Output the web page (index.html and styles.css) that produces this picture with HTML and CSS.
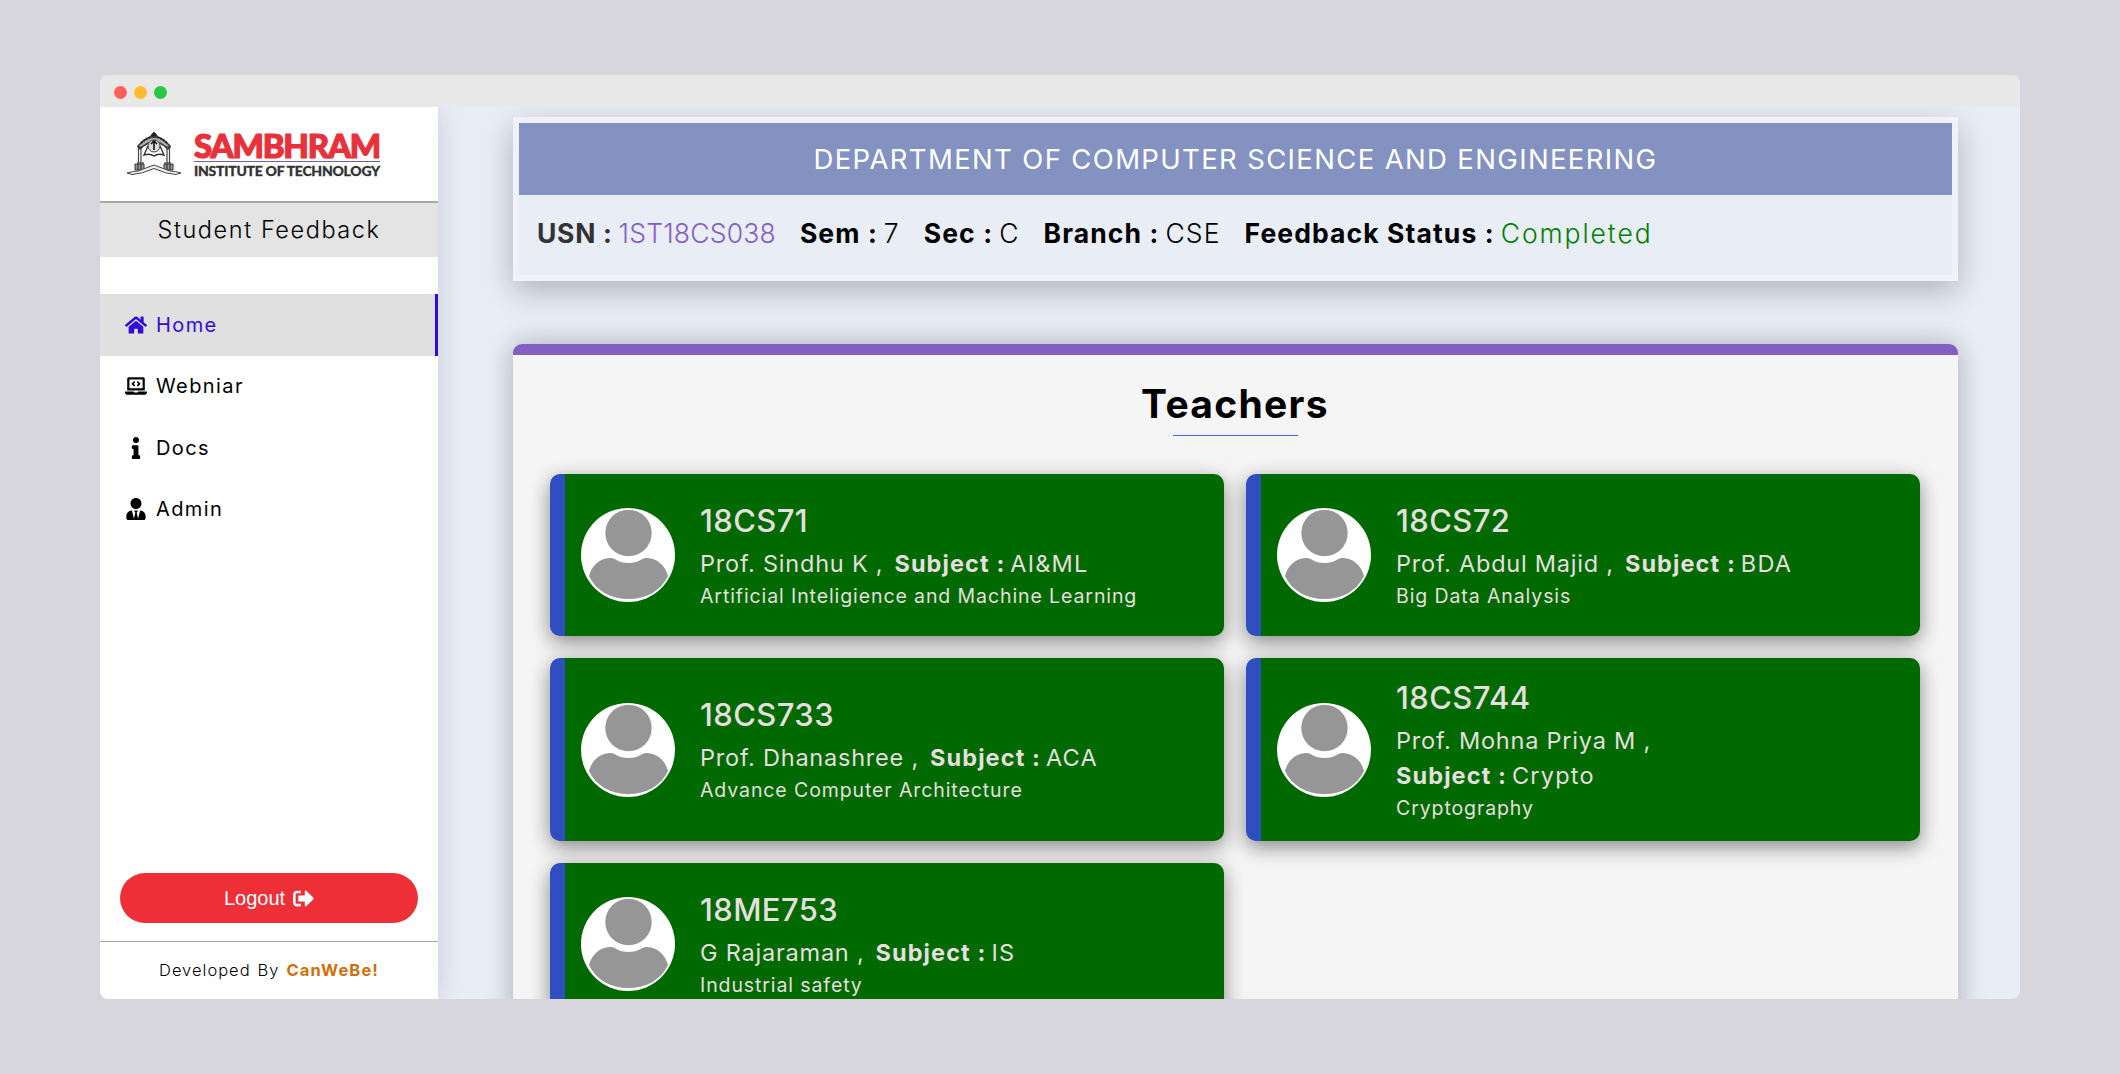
FILE: index.html
```html
<!DOCTYPE html>
<html lang="en">
<head>
<meta charset="utf-8">
<title>Student Feedback</title>
<link rel="stylesheet" href="styles.css">
</head>
<body>
<svg class="defs" aria-hidden="true">
  <symbol id="avatar" viewBox="0 0 94 94">
    <circle cx="47" cy="47" r="47" fill="#fff"/>
    <circle cx="47.500" cy="25" r="23.200" fill="#969696"/>
    <path d="M8 68C11 57 19 50 30 50C34 50 37 55 47.500 55C58 55 61 50 65 50C76 50 84 57 87 68C80 83 65 91 47.500 91C30 91 15 83 8 68Z" fill="#969696"/>
  </symbol>
</svg>
<div class="window">
  <div class="titlebar"><i class="dot red"></i><i class="dot amber"></i><i class="dot green"></i></div>
  <div class="app">
    <aside class="sidebar">
      <div class="brand">
        <svg class="crest" viewBox="0 0 56 44" fill="none" stroke="#444" stroke-width="1">
          <path d="M12 14Q28-5 44 14L42 17Q28 3 14 17Z" fill="#aaa" stroke="#333" stroke-width="1.300"/>
          <path d="M15 11Q28-1 41 11" stroke="#222" stroke-width="2" stroke-dasharray="2 1"/>
          <path d="M25 3L28 0L31 3V5H25Z" fill="#222"/>
          <path d="M12.500 16V31M15 16V31M41 16V31M43.500 16V31" stroke-width="1.200"/>
          <path d="M11 15H17M39 15H45M11 31H18M38 31H45" stroke="#222"/>
          <circle cx="28" cy="14" r="6" fill="#ddd"/>
          <path d="M28 9V18M25 12L28 9L31 12" stroke="#111" stroke-width="1.600"/>
          <path d="M22 14L18 23Q24 21 28 24Q32 21 38 23L34 14" stroke="#333" stroke-width="1.400"/>
          <path d="M9 32H18V38H9ZM38 32H47V38H38Z" fill="#999" stroke="#333"/>
          <path d="M12 32V38M15 32V38M41 32V38M44 32V38" stroke="#222"/>
          <path d="M1 41Q8 39 12 39Q20 36 28 33Q36 36 44 39Q49 39 55 41L50 42.500Q40 42 28 36.500Q16 42 6 42.500Z" fill="#eee" stroke="#444"/>
        </svg>
        <div class="wordmark"><span class="name">SAMBHRAM</span><span class="tagline">INSTITUTE OF TECHNOLOGY</span></div>
      </div>
      <div class="subtitle">Student Feedback</div>
      <nav class="nav">
        <a class="item active"><svg viewBox="0 0 576 512"><path d="M280.37 148.26L96 300.11V464a16 16 0 0 0 16 16l112.06-.29a16 16 0 0 0 15.92-16V368a16 16 0 0 1 16-16h64a16 16 0 0 1 16 16v95.640a16 16 0 0 0 16 16.050L464 480a16 16 0 0 0 16-16V300L295.670 148.260a12.190 12.190 0 0 0-15.300 0zM571.600 251.470L488 182.560V44.050a12 12 0 0 0-12-12h-56a12 12 0 0 0-12 12v72.610L318.470 43a48 48 0 0 0-61 0L4.340 251.470a12 12 0 0 0-1.600 16.900l25.500 31A12 12 0 0 0 45.150 301l235.220-193.740a12.190 12.190 0 0 1 15.300 0L530.900 301a12 12 0 0 0 16.900-1.600l25.500-31a12 12 0 0 0-1.700-16.930z"/></svg><span>Home</span></a>
        <a class="item"><svg viewBox="0 0 640 512"><path d="M255.030 261.650c6.250 6.250 16.380 6.250 22.630 0l11.310-11.310c6.250-6.250 6.250-16.380 0-22.630L253.250 192l35.710-35.720c6.250-6.250 6.250-16.380 0-22.630l-11.310-11.310c-6.250-6.250-16.380-6.250-22.630 0l-58.340 58.340c-6.250 6.250-6.250 16.380 0 22.630l58.350 58.340zm96.010-11.300l11.310 11.310c6.250 6.250 16.380 6.250 22.630 0l58.340-58.340c6.250-6.250 6.250-16.380 0-22.630l-58.340-58.340c-6.250-6.250-16.380-6.250-22.630 0l-11.310 11.310c-6.250 6.250-6.250 16.380 0 22.630L386.750 192l-35.710 35.720c-6.250 6.250-6.250 16.380 0 22.630zM624 416H381.540c-.74 19.810-14.710 32-32.740 32H288c-18.690 0-33.020-17.470-32.770-32H16c-8.800 0-16 7.200-16 16v16c0 35.200 28.800 64 64 64h512c35.200 0 64-28.800 64-64v-16c0-8.800-7.200-16-16-16zM576 48c0-26.400-21.600-48-48-48H112C85.600 0 64 21.600 64 48v336h512V48zm-64 272H128V64h384v256z"/></svg><span>Webniar</span></a>
        <a class="item"><svg viewBox="0 0 192 512"><path d="M20 424.229h20V279.771H20c-11.046 0-20-8.954-20-20V212c0-11.046 8.954-20 20-20h112c11.046 0 20 8.954 20 20v212.229h20c11.046 0 20 8.954 20 20V492c0 11.046-8.954 20-20 20H20c-11.046 0-20-8.954-20-20v-47.771c0-11.046 8.954-20 20-20zM96 0C56.235 0 24 32.235 24 72s32.235 72 72 72 72-32.235 72-72S135.764 0 96 0z"/></svg><span>Docs</span></a>
        <a class="item"><svg viewBox="0 0 448 512"><path d="M224 256c70.700 0 128-57.300 128-128S294.700 0 224 0 96 57.300 96 128s57.300 128 128 128zm95.800 32.600L272 480l-32-136 32-56h-96l32 56-32 136-47.800-191.400C56.900 292 0 350.300 0 422.400V464c0 26.500 21.500 48 48 48h352c26.500 0 48-21.500 48-48v-41.600c0-72.100-56.900-130.400-128.200-133.800z"/></svg><span>Admin</span></a>
      </nav>
      <button class="logout"><span>Logout</span><svg viewBox="0 0 512 512"><path d="M497 273L329 441c-15 15-41 4.500-41-17v-96H152c-13.300 0-24-10.700-24-24v-96c0-13.300 10.700-24 24-24h136V88c0-21.400 25.900-32 41-17l168 168c9.300 9.400 9.300 24.600 0 34zM192 436v-40c0-6.600-5.400-12-12-12H96c-17.700 0-32-14.300-32-32V160c0-17.700 14.300-32 32-32h84c6.600 0 12-5.400 12-12V76c0-6.600-5.400-12-12-12H96c-53 0-96 43-96 96v192c0 53 43 96 96 96h84c6.600 0 12-5.400 12-12z"/></svg></button>
      <footer class="credit"><span>Developed</span><span>By</span><b>CanWeBe!</b></footer>
    </aside>
    <main class="main">
      <section class="summary">
        <h1 class="department">DEPARTMENT OF COMPUTER SCIENCE AND ENGINEERING</h1>
        <div class="facts">
          <div class="fact usn"><b>USN :</b><span>1ST18CS038</span></div>
          <div class="fact"><b>Sem :</b><span>7</span></div>
          <div class="fact"><b>Sec :</b><span>C</span></div>
          <div class="fact"><b>Branch :</b><span>CSE</span></div>
          <div class="fact done"><b>Feedback Status :</b><span>Completed</span></div>
        </div>
      </section>
      <section class="panel">
        <h2 class="heading">Teachers</h2>
        <div class="cards">
          <article class="card"><svg class="avatar"><use href="#avatar"/></svg><div class="info"><h3>18CS71</h3><p><span>Prof. Sindhu K ,</span><b>Subject :</b><span>AI&amp;ML</span></p><small>Artificial Inteligience and Machine Learning</small></div></article>
          <article class="card"><svg class="avatar"><use href="#avatar"/></svg><div class="info"><h3>18CS72</h3><p><span>Prof. Abdul Majid ,</span><b>Subject :</b><span>BDA</span></p><small>Big Data Analysis</small></div></article>
          <article class="card"><svg class="avatar"><use href="#avatar"/></svg><div class="info"><h3>18CS733</h3><p><span>Prof. Dhanashree ,</span><b>Subject :</b><span>ACA</span></p><small>Advance Computer Architecture</small></div></article>
          <article class="card"><svg class="avatar"><use href="#avatar"/></svg><div class="info"><h3>18CS744</h3><p><span>Prof. Mohna Priya M ,</span></p><p><b>Subject :</b><span>Crypto</span></p><small>Cryptography</small></div></article>
          <article class="card"><svg class="avatar"><use href="#avatar"/></svg><div class="info"><h3>18ME753</h3><p><span>G Rajaraman ,</span><b>Subject :</b><span>IS</span></p><small>Industrial safety</small></div></article>
        </div>
      </section>
    </main>
  </div>
</div>
</body>
</html>
```
FILE: styles.css
```css
* { box-sizing: border-box; }
body { margin: 0; width: 2120px; height: 1074px; padding: 75px 100px; background: #d7d6dc; color: #000; font-family: Inter, sans-serif; overflow: hidden; }
h1, h2, h3, p { margin: 0; font-weight: 400; }
b { font-weight: 700; }
.defs { position: absolute; width: 0; height: 0; }
.window { height: 924px; border-radius: 8px; overflow: hidden; background: #e9edf6; }
.titlebar { height: 32px; background: #e8e8e8; display: flex; align-items: center; gap: 7px; padding: 2px 0 0 13.500px; }
.dot { width: 13px; height: 13px; border-radius: 50%; }
.red { background: #ff5f57; }
.amber { background: #febc2e; }
.green { background: #28c840; }
.app { display: flex; height: 892px; overflow: hidden; }

.sidebar { width: 338px; flex: none; background: #fff; display: flex; flex-direction: column; box-shadow: 0 0 28px rgba(60, 80, 110, .2); }
.brand { height: 96px; border-bottom: 2px solid #a9a9a9; display: flex; padding: 25px 0 0 26px; gap: 12px; }
.crest { width: 56px; height: 44px; }
.wordmark { display: flex; flex-direction: column; font-family: Lato, sans-serif; font-weight: 900; white-space: nowrap; }
.name { color: #e8313a; font-size: 33px; line-height: 27px; height: 30px; width: 186px; border-bottom: 1px solid #66649f; letter-spacing: -1.2px; -webkit-text-stroke: 1.2px #e8313a; }
.tagline { color: #333; font-size: 14px; line-height: 18px; letter-spacing: -.26px; -webkit-text-stroke: .3px #333; }
.subtitle { height: 54px; background: #e4e4e4; text-align: center; font-size: 23.500px; font-weight: 300; line-height: 53px; letter-spacing: 1.56px; }
.nav { margin-top: 37px; }
.item { display: flex; align-items: center; height: 61.500px; padding-left: 25px; gap: 9px; font-size: 20px; letter-spacing: 1.4px; }
.item svg { width: 22px; height: 22px; fill: currentColor; }
.active { background: #e0e0e0; color: #330bd8; border-right: 3px solid #330bd8; }
.logout { margin: auto 20px 18px; height: 50px; border: 0; border-radius: 25px; background: #ee2f37; color: #fff; font: 20px "Liberation Sans", sans-serif; display: flex; align-items: center; justify-content: center; gap: 8px; }
.logout svg { width: 21px; height: 21px; fill: #fff; }
.credit { height: 58px; padding-bottom: 2px; border-top: 1px solid #aaa; display: flex; align-items: center; justify-content: center; gap: 7px; font-size: 16.500px; font-weight: 300; letter-spacing: 1px; }
.credit b { color: #d0700a; letter-spacing: 1.1px; }

.main { flex: 1; padding: 10px 62px 0 75px; }
.summary { height: 164px; border: 6px solid #f2f0fd; background: #e9edf6; box-shadow: 0 10px 30px rgba(0, 0, 0, .25); }
.department { height: 72px; background: #8492c1; color: #fff; font-size: 27.500px; line-height: 72px; text-align: center; letter-spacing: 1.35px; }
.facts { display: flex; gap: 24px; padding-left: 18px; font-size: 26.500px; line-height: 77px; font-weight: 300; white-space: nowrap; letter-spacing: 1.1px; }
.fact { display: flex; gap: 6px; }
.usn b { color: #333; letter-spacing: .7px; }
.usn span { color: #855ec3; letter-spacing: .2px; }
.done span { color: #008000; letter-spacing: 1.93px; }

.panel { margin-top: 63px; height: 800px; border-top: 11px solid #855ec3; border-radius: 9px 9px 0 0; background: #f5f5f5; padding: 0 38px 0 37px; box-shadow: 0 0 28px rgba(0, 0, 0, .28); }
.heading { width: 125px; height: 81px; margin: 0 auto 38px; padding-top: 9px; border-bottom: 1px solid #4169e1; display: flex; justify-content: center; font-size: 39px; font-weight: 700; line-height: 80px; letter-spacing: 1.3px; }
.cards { display: grid; grid-template-columns: 674px 674px; grid-template-rows: 162px 183px 162px; gap: 22px; }
.card { display: flex; align-items: center; background: #006a00; border-left: 15px solid #2f4fc1; border-radius: 10px; padding-left: 16px; gap: 25px; color: #e6dfdf; box-shadow: 0 6px 20px rgba(0, 0, 0, .45); }
.avatar { width: 94px; height: 94px; flex: none; }
.info { padding-bottom: 4px; white-space: nowrap; }
.info h3 { font-size: 31px; font-weight: 500; line-height: 50px; letter-spacing: .4px; }
.info p { font-size: 23.500px; line-height: 35px; display: flex; letter-spacing: .78px; }
.info p b { letter-spacing: 1.1px; }
.info span + b { margin-left: 11px; }
.info b + span { margin-left: 5px; letter-spacing: 1.2px; }
.info small { display: block; font-size: 19.500px; line-height: 30px; letter-spacing: .9px; }
```
